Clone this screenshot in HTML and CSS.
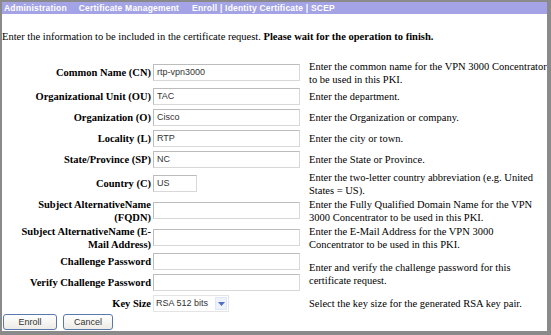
FILE: index.html
```html
<!DOCTYPE html>
<html>
<head>
<meta charset="utf-8">
<link rel="stylesheet" href="styles.css">
</head>
<body>
<div class="frame">
  <div class="crumbs"><span>Administration</span><span class="cm">Certificate Management</span><span class="en">Enroll | Identity Certificate | SCEP</span></div>
  <p class="intro">Enter the information to be included in the certificate request. <b>Please wait for the operation to finish.</b></p>
  <table class="form">
    <colgroup><col class="c-label"><col class="c-input"><col class="c-desc"></colgroup>
    <tr class="double">
      <th>Common Name (CN)</th>
      <td><span class="field">rtp-vpn3000</span></td>
      <td class="desc">Enter the common name for the VPN 3000 Concentrator<br>to be used in this PKI.</td>
    </tr>
    <tr>
      <th>Organizational Unit (OU)</th>
      <td><span class="field">TAC</span></td>
      <td class="desc">Enter the department.</td>
    </tr>
    <tr>
      <th>Organization (O)</th>
      <td><span class="field">Cisco</span></td>
      <td class="desc">Enter the Organization or company.</td>
    </tr>
    <tr>
      <th>Locality (L)</th>
      <td><span class="field">RTP</span></td>
      <td class="desc">Enter the city or town.</td>
    </tr>
    <tr>
      <th>State/Province (SP)</th>
      <td><span class="field">NC</span></td>
      <td class="desc">Enter the State or Province.</td>
    </tr>
    <tr class="double">
      <th>Country (C)</th>
      <td><span class="field short">US</span></td>
      <td class="desc">Enter the two-letter country abbreviation (e.g. United<br>States = US).</td>
    </tr>
    <tr class="double">
      <th>Subject AlternativeName<br>(FQDN)</th>
      <td><span class="field"></span></td>
      <td class="desc">Enter the Fully Qualified Domain Name for the VPN<br>3000 Concentrator to be used in this PKI.</td>
    </tr>
    <tr class="double">
      <th>Subject AlternativeName (E-<br>Mail Address)</th>
      <td><span class="field"></span></td>
      <td class="desc">Enter the E-Mail Address for the VPN 3000<br>Concentrator to be used in this PKI.</td>
    </tr>
    <tr>
      <th>Challenge Password</th>
      <td><span class="field"></span></td>
      <td class="desc span" rowspan="2">Enter and verify the challenge password for this<br>certificate request.</td>
    </tr>
    <tr>
      <th>Verify Challenge Password</th>
      <td><span class="field"></span></td>
    </tr>
    <tr>
      <th>Key Size</th>
      <td><span class="select"><span class="sel-text">RSA 512 bits</span><span class="sel-btn"><svg width="7" height="4" viewBox="0 0 7 4"><path d="M0 0H7L3.5 4Z" fill="#4d6fc4"/></svg></span></span></td>
      <td class="desc">Select the key size for the generated RSA key pair.</td>
    </tr>
  </table>
  <div class="buttons">
    <span class="btn enroll">Enroll</span>
    <span class="btn cancel">Cancel</span>
  </div>
</div>
</body>
</html>
```
FILE: styles.css
```css
html, body {
  margin: 0;
  padding: 0;
  background: #ffffff;
}
body {
  font-family: "Liberation Serif", "Times New Roman", serif;
  color: #000;
}
.frame {
  width: 551px;
  height: 335px;
  box-sizing: border-box;
  border-left: 2px solid #8a8a8a;
  border-top: 2px solid #8a8a8a;
  border-right: 4px solid #8a8a8a;
  border-bottom: 4px solid #8a8a8a;
  background: #fff;
  overflow: hidden;
}
.crumbs {
  height: 12px;
  background: #a3a3e6;
  color: #fff;
  font: bold 8.5px/12px "Liberation Sans", Arial, sans-serif;
  letter-spacing: 0.2px;
  padding-left: 2px;
  white-space: nowrap;
}
.crumbs .cm {
  margin-left: 12px;
}
.crumbs .en {
  margin-left: 13px;
}
.intro {
  margin: 15.5px 0 0 0;
  font-size: 10.5px;
  line-height: 13px;
  white-space: nowrap;
}
.form {
  margin-top: 16.5px;
  table-layout: fixed;
  width: 545px;
  border-collapse: collapse;
  border-spacing: 0;
  font-size: 10.5px;
  line-height: 13px;
}
.c-label { width: 151px; }
.c-input { width: 154px; }
.form tr { height: 21px; }
.form th, .form td {
  padding: 0.5px 0;
  vertical-align: middle;
  white-space: nowrap;
}
.form th {
  text-align: right;
  padding-right: 2px;
  font-weight: bold;
}
.form td.desc {
  padding-left: 2px;
}
.form td.span {
  padding-top: 5px;
}
.field {
  display: block;
  width: 147px;
  height: 17px;
  box-sizing: border-box;
  border: 1px solid #bcbcbc;
  border-right-color: #d8d8d8;
  border-bottom-color: #d8d8d8;
  font: 9px/15px "Liberation Sans", Arial, sans-serif;
  color: #333;
  padding-left: 3px;
}
.field.short {
  width: 44px;
}
.select {
  display: flex;
  align-items: center;
  width: 76px;
  height: 17px;
  box-sizing: border-box;
  border: 1px solid #e4e4e4;
  font: 9px/15px "Liberation Sans", Arial, sans-serif;
  color: #333;
}
.sel-text {
  flex: 1;
  padding-left: 2px;
}
.sel-btn {
  width: 12px;
  height: 13px;
  margin-right: 1px;
  display: flex;
  align-items: center;
  justify-content: center;
  background: #eef2fb;
  border: 1px solid #dfe6f5;
  box-sizing: border-box;
}
.buttons {
  display: flex;
  gap: 6px;
  padding-left: 1px;
}
.btn {
  display: flex;
  align-items: center;
  justify-content: center;
  height: 16px;
  box-sizing: border-box;
  border: 1px solid #5a78b0;
  border-radius: 3px;
  background: linear-gradient(#ffffff, #ecebe6);
  font: 9px/14px "Liberation Sans", Arial, sans-serif;
  color: #333;
}
.enroll { width: 54px; }
.cancel { width: 50px; }
```
